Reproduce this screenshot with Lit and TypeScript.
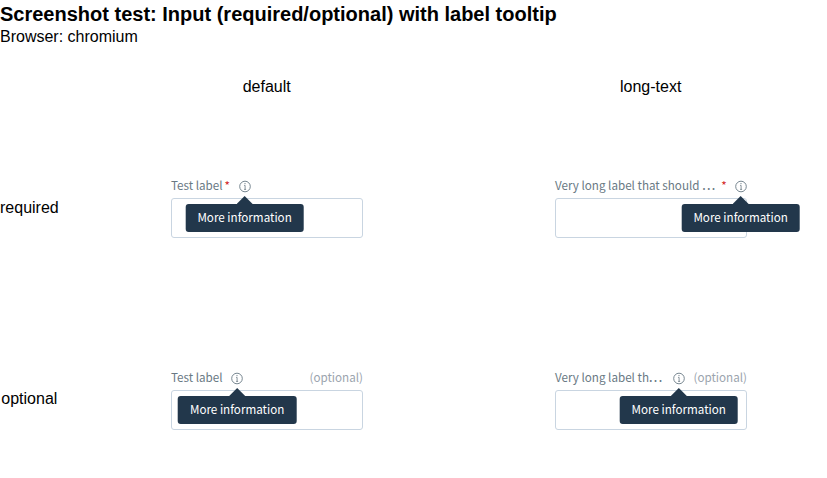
import { LitElement, html, css, nothing } from "lit";
import { customElement, property } from "lit/decorators.js";

@customElement("label-tooltip")
class LabelTooltip extends LitElement {
  static styles = css`
    :host {
      display: block;
      position: relative;
      width: 12px;
      height: 12px;
      flex: none;
    }
    svg {
      display: block;
    }
    .bubble {
      position: absolute;
      z-index: 1;
      top: 24px;
      left: 50%;
      transform: translateX(-50%);
      box-sizing: border-box;
      width: 118.6px;
      height: 28px;
      border-radius: 3px;
      background: #22374b;
      color: #fff;
      font-size: 11.65px;
      line-height: 26px;
      text-align: center;
      white-space: nowrap;
    }
    .arrow {
      position: absolute;
      z-index: 1;
      top: 16px;
      left: -2px;
      width: 16px;
      height: 8px;
      background: #22374b;
      clip-path: polygon(50% 0, 100% 100%, 0 100%);
    }
  `;
  @property() text = "";
  render() {
    return html`
      <svg width="12" height="13" viewBox="0 0 12 13" fill="none" stroke="#697984">
        <circle cx="6" cy="6.5" r="5.3" stroke-width="0.9" />
        <path d="M5.1 5.4h1v4M5.1 9.4h2" stroke-width="0.8" />
        <circle cx="6" cy="3.6" r="0.6" fill="#697984" stroke="none" />
      </svg>
      <div class="arrow"></div>
      <div class="bubble">${this.text}</div>
    `;
  }
}

@customElement("labelled-input")
class LabelledInput extends LitElement {
  static styles = css`
    :host {
      display: block;
      width: 192px;
      font-family: "Noto Sans CJK SC", "Noto Sans", sans-serif;
      font-size: 11.65px;
      color: #697984;
    }
    .row {
      display: flex;
      align-items: flex-start;
      height: 16px;
      margin-bottom: 4px;
      line-height: 14px;
      white-space: nowrap;
    }
    .label {
      flex: none;
    }
    .dots {
      font-weight: 500;
      letter-spacing: 1.4px;
    }
    .star {
      color: #d21c1c;
      margin-left: 2px;
      flex: none;
    }
    label-tooltip {
      margin: 2px 0 0 8.6px;
    }
    .long label-tooltip {
      margin-left: auto;
      margin-right: 0.4px;
    }
    .long .star {
      margin-left: 4.4px;
    }
    .optional {
      margin-left: auto;
      color: #9ba4ae;
      flex: none;
    }
    .long .optional {
      margin-left: 8.3px;
    }
    .field {
      box-sizing: border-box;
      width: 192px;
      height: 40px;
      border: 1px solid #c9d5e1;
      border-radius: 3px;
      background: #fff;
    }
  `;
  @property() label = "";
  @property({ type: Boolean }) clipped = false;
  @property({ type: Boolean }) required = false;
  render() {
    return html`
      <div class=${this.clipped ? "row long" : "row"}>
        <span class="label">${this.label}${this.clipped ? html`<span class="dots">...</span>` : nothing}</span>
        ${this.required ? html`<span class="star">*</span>` : nothing}
        <label-tooltip text="More information"></label-tooltip>
        ${this.required ? nothing : html`<span class="optional">(optional)</span>`}
      </div>
      <div class="field"></div>
    `;
  }
}

@customElement("app-root")
class AppRoot extends LitElement {
  static styles = css`
    :host {
      display: block;
      height: 478px;
      overflow: hidden;
      background: #fff;
      color: #000;
      font: 16px/18px "Liberation Sans", Arial, sans-serif;
    }
    h1 {
      margin: 0;
      padding-top: 3px;
      font-size: 20px;
      line-height: 23px;
    }
    .browser {
      margin: 2px 0 0;
    }
    .matrix {
      display: grid;
      grid-template-columns: 75px 384px 384px;
      grid-template-rows: 66px 192px 192px;
    }
    .column {
      text-align: center;
      padding: 32px 0.6px 0 0;
    }
    .side {
      width: 58.7px;
      text-align: center;
      padding-top: 87px;
    }
    .side.optional {
      padding-top: 86px;
    }
    .cell {
      display: flex;
      justify-content: center;
      padding-top: 66px;
    }
  `;
  render() {
    const rows = [
      { kind: "required", long: "Very long label that should " },
      { kind: "optional", long: "Very long label th" },
    ];
    return html`
      <h1>Screenshot test: Input (required/optional) with label tooltip</h1>
      <p class="browser">Browser: chromium</p>
      <div class="matrix">
        <div></div>
        <div class="column">default</div>
        <div class="column">long-text</div>
        ${rows.map(
          ({ kind, long }) => html`
            <div class="side ${kind}">${kind}</div>
            ${["Test label", long].map(
              (label, i) => html`<div class="cell">
                <labelled-input
                  .label=${label}
                  .clipped=${i === 1}
                  .required=${kind === "required"}
                ></labelled-input>
              </div>`
            )}
          `
        )}
      </div>
    `;
  }
}
